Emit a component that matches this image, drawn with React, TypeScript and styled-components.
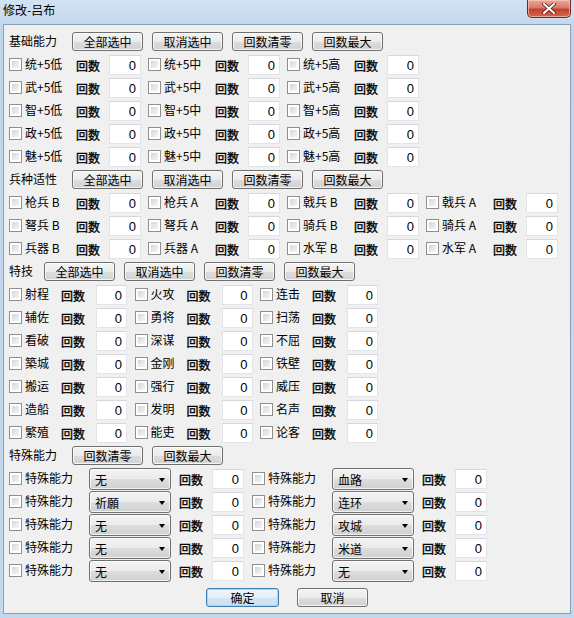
import React from "react";
import styled, { createGlobalStyle } from "styled-components";

const GlobalStyle = createGlobalStyle`
  html, body { margin: 0; padding: 0; background: #c6daee; }
  body { font-family: "Noto Sans CJK SC", "Noto Sans", sans-serif; font-size: 12px; color: #000; }
  * { box-sizing: border-box; }
`;

const Window = styled.div`
  width: 574px;
  height: 618px;
  display: flex;
  flex-direction: column;
  background: linear-gradient(180deg, #d3e3f3 0px, #c0d5ec 30px, #c4d8ed 100%);
  overflow: hidden;
`;

const TitleBar = styled.div`
  height: 24px;
  display: flex;
  align-items: flex-start;
  justify-content: space-between;
  padding-left: 3px;
`;

const TitleText = styled.div`
  font-size: 12px;
  line-height: 20px;
  color: #000;
`;

const CloseButton = styled.div`
  width: 44px;
  height: 18px;
  margin-right: 3px;
  border: 1px solid #6a2b20;
  border-top: none;
  border-radius: 0 0 5px 5px;
  background: linear-gradient(180deg, #e9a898 0%, #d8796a 45%, #c4412c 55%, #d4664c 100%);
  box-shadow: inset 0 0 0 1px rgba(255, 210, 200, 0.6);
  display: flex;
  align-items: center;
  justify-content: center;
`;

const Client = styled.div`
  margin: 0 3px;
  height: 590px;
  border: 1px solid #8b9fb6;
  background: #f0f0f0;
  padding: 5px 5px 0 5px;
  display: flex;
  flex-direction: column;
`;

const SectionHeader = styled.div`
  height: 23px;
  display: flex;
  align-items: center;
`;

const HeaderTitle = styled.div<{ $w: number }>`
  width: ${(p) => p.$w}px;
  flex: none;
  font-size: 12px;
  line-height: 1;
  padding-bottom: 1px;
`;

const ButtonGroup = styled.div`
  display: flex;
  gap: 9px;
`;

const Btn = styled.div<{ $primary?: boolean }>`
  width: ${(p) => (p.$primary ? 73 : 71)}px;
  height: 19px;
  border: 1px solid ${(p) => (p.$primary ? "#3c7fb1" : "#707070")};
  border-radius: 3px;
  background: ${(p) =>
    p.$primary
      ? "linear-gradient(180deg, #eef6fb 0%, #e3eff8 50%, #d3e5f3 50%, #cde0ef 100%)"
      : "linear-gradient(180deg, #f4f4f4 0%, #ebebeb 50%, #dddddd 50%, #d2d2d2 100%)"};
  box-shadow: inset 0 0 0 1px ${(p) => (p.$primary ? "#a7d9f4" : "rgba(255,255,255,0.75)")};
  display: flex;
  align-items: center;
  justify-content: center;
  font-size: 12px;
  line-height: 1;
  color: #000;
`;

const Grid = styled.div<{ $cols: number; $colW: number }>`
  display: grid;
  grid-template-columns: repeat(${(p) => p.$cols}, ${(p) => p.$colW}px);
  grid-auto-rows: 23px;
`;

const Cell = styled.div`
  display: flex;
  align-items: center;
`;

const CheckBox = styled.span`
  width: 13px;
  height: 13px;
  flex: none;
  margin-right: 3px;
  border: 1px solid #8f8f8f;
  background: #fff;
  padding: 2px;
  display: flex;
  &::after {
    content: "";
    flex: 1;
    background: linear-gradient(135deg, #d2d4d8 0%, #e6e7e9 50%, #f4f4f4 100%);
  }
`;

const Label = styled.span<{ $w: number }>`
  width: ${(p) => p.$w}px;
  flex: none;
  font-size: 12px;
  line-height: 1;
  white-space: pre;
  padding-bottom: 1px;
`;

const CountLabel = styled.span<{ $w: number }>`
  width: ${(p) => p.$w}px;
  flex: none;
  font-size: 12px;
  font-weight: 400;
  -webkit-text-stroke: 0.35px #000;
  line-height: 1;
  padding-top: 3px;
  color: #000;
`;

const NumBox = styled.div<{ $w: number }>`
  width: ${(p) => p.$w}px;
  height: 20px;
  flex: none;
  background: #fff;
  border: 1px solid #e3e4e8;
  border-top-color: #d5d7dc;
  text-align: right;
  padding-right: 4px;
  font-family: "Liberation Sans", Arial, sans-serif;
  font-size: 13px;
  line-height: 19px;
`;

const Select = styled.div`
  width: 82px;
  height: 22px;
  flex: none;
  margin-right: 8px;
  border: 1px solid #707070;
  border-radius: 3px;
  background: linear-gradient(180deg, #f3f3f3 0%, #ebebeb 50%, #dddddd 50%, #d0d0d0 100%);
  box-shadow: inset 0 0 0 1px rgba(255,255,255,0.7);
  display: flex;
  align-items: center;
  justify-content: space-between;
  padding: 0 5px 0 5px;
  font-size: 12px;
  line-height: 1;
`;

const SelectText = styled.span`
  padding-top: 3px;
`;

const Arrow = styled.span`
  width: 0;
  height: 0;
  border-left: 3.5px solid transparent;
  border-right: 3.5px solid transparent;
  border-top: 4px solid #000;
  margin-top: 2px;
`;

const Footer = styled.div`
  display: flex;
  justify-content: center;
  gap: 18px;
  padding-top: 6px;
`;

const basic = ["统", "武", "智", "政", "魅"];
const troop = [
  ["枪兵 B", "枪兵 A", "戟兵 B", "戟兵 A"],
  ["弩兵 B", "弩兵 A", "骑兵 B", "骑兵 A"],
  ["兵器 B", "兵器 A", "水军 B", "水军 A"],
];
const skills = [
  ["射程", "火攻", "连击"],
  ["辅佐", "勇将", "扫荡"],
  ["看破", "深谋", "不屈"],
  ["築城", "金刚", "铁壁"],
  ["搬运", "强行", "威压"],
  ["造船", "发明", "名声"],
  ["繁殖", "能吏", "论客"],
];
const specials = [
  ["无", "血路"],
  ["祈願", "连环"],
  ["无", "攻城"],
  ["无", "米道"],
  ["无", "无"],
];

const fullButtons = ["全部选中", "取消选中", "回数清零", "回数最大"];

function Header({ title, w, buttons }: { title: string; w: number; buttons: string[] }) {
  return (
    <SectionHeader>
      <HeaderTitle $w={w}>{title}</HeaderTitle>
      <ButtonGroup>
        {buttons.map((b) => (
          <Btn key={b}>{b}</Btn>
        ))}
      </ButtonGroup>
    </SectionHeader>
  );
}

function CountCell({ label, lw, cw, nw }: { label: string; lw: number; cw: number; nw: number }) {
  return (
    <Cell>
      <CheckBox />
      <Label $w={lw}>{label}</Label>
      <CountLabel $w={cw}>回数</CountLabel>
      <NumBox $w={nw}>0</NumBox>
    </Cell>
  );
}

export default function App() {
  const basicCells: string[] = [];
  basic.forEach((b) => ["低", "中", "高"].forEach((lv) => basicCells.push(`${b}+5${lv}`)));

  return (
    <>
      <GlobalStyle />
      <Window>
        <TitleBar>
          <TitleText>修改-吕布</TitleText>
          <CloseButton>
            <svg width="14" height="11" viewBox="0 0 14 11">
              <path d="M2 1 L12 10 M12 1 L2 10" stroke="#5a1a10" strokeWidth="3.6" strokeLinecap="round" />
              <path d="M2 1 L12 10 M12 1 L2 10" stroke="#ffffff" strokeWidth="2" strokeLinecap="round" />
            </svg>
          </CloseButton>
        </TitleBar>
        <Client>
          <Header title="基础能力" w={63} buttons={fullButtons} />
          <Grid $cols={3} $colW={139}>
            {basicCells.map((c, i) => (
              <CountCell key={i} label={c} lw={51} cw={33} nw={32} />
            ))}
          </Grid>

          <Header title="兵种适性" w={63} buttons={fullButtons} />
          <Grid $cols={4} $colW={139}>
            {troop.flat().map((t, i) => (
              <CountCell key={i} label={t} lw={51} cw={33} nw={32} />
            ))}
          </Grid>

          <Header title="特技" w={35} buttons={fullButtons} />
          <Grid $cols={3} $colW={125.5}>
            {skills.flat().map((s, i) => (
              <CountCell key={i} label={s} lw={36} cw={35} nw={31} />
            ))}
          </Grid>

          <Header title="特殊能力" w={63} buttons={["回数清零", "回数最大"]} />
          <Grid $cols={2} $colW={243}>
            {specials.flat().map((s, i) => (
              <Cell key={i}>
                <CheckBox />
                <Label $w={64}>特殊能力</Label>
                <Select>
                  <SelectText>{s}</SelectText>
                  <Arrow />
                </Select>
                <CountLabel $w={33}>回数</CountLabel>
                <NumBox $w={32}>0</NumBox>
              </Cell>
            ))}
          </Grid>

          <Footer>
            <Btn $primary>确定</Btn>
            <Btn>取消</Btn>
          </Footer>
        </Client>
      </Window>
    </>
  );
}
